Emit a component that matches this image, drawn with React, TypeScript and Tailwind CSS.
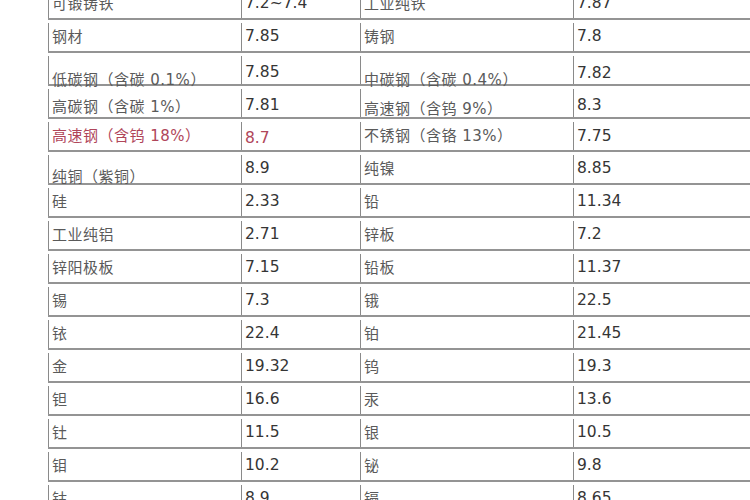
type Cell = { text: string; lift?: string; red?: boolean }
type Row = [Cell, Cell, Cell, Cell]

const c = (text: string, lift?: string, red?: boolean): Cell => ({ text, lift, red })

const rows: Row[] = [
  [c("可锻铸铁"), c("7.2~7.4"), c("工业纯铁"), c("7.87")],
  [c("钢材"), c("7.85"), c("铸钢"), c("7.8")],
  [c("低碳钢（含碳 0.1%）", "translate-y-[10px]"), c("7.85", "translate-y-[3px]"), c("中碳钢（含碳 0.4%）", "translate-y-[10px]"), c("7.82", "translate-y-[4px]")],
  [c("高碳钢（含碳 1%）", "translate-y-[4px]"), c("7.81", "translate-y-[3px]"), c("高速钢（含钨 9%）", "translate-y-[6px]"), c("8.3", "translate-y-[3px]")],
  [c("高速钢（含钨 18%）", "", true), c("8.7", "translate-y-[3px]", true), c("不锈钢（含铬 13%）"), c("7.75", "translate-y-[1px]")],
  [c("纯铜（紫铜）", "translate-y-[8px]"), c("8.9"), c("纯镍"), c("8.85")],
  [c("硅"), c("2.33"), c("铅"), c("11.34")],
  [c("工业纯铝"), c("2.71"), c("锌板"), c("7.2")],
  [c("锌阳极板"), c("7.15"), c("铅板"), c("11.37")],
  [c("锡"), c("7.3"), c("锇"), c("22.5")],
  [c("铱"), c("22.4"), c("铂"), c("21.45")],
  [c("金"), c("19.32"), c("钨"), c("19.3")],
  [c("钽"), c("16.6"), c("汞"), c("13.6")],
  [c("钍"), c("11.5"), c("银"), c("10.5")],
  [c("钼"), c("10.2"), c("铋"), c("9.8")],
  [c("钴"), c("8.9"), c("镉"), c("8.65")],
]

const TableCell = ({ cell, value }: { cell: Cell; value: boolean }) => {
  const color = cell.red ? "text-[#b0465a]" : value ? "text-[#353535]" : "text-[#5a5a5a]"
  return (
    <div className="flex items-center border-l border-[#8a8a8a] pl-[3px] overflow-visible">
      <span
        className={`whitespace-nowrap leading-none ${value ? "text-[15.5px]" : "text-[15px] tracking-[0.5px]"} ${color} ${cell.lift ?? ""}`}
      >
        {cell.text}
      </span>
    </div>
  )
}

export default function App() {
  return (
    <div
      className="w-[750px] h-[500px] overflow-hidden bg-white"
      style={{ fontFamily: '"DejaVu Sans", "Noto Sans CJK SC", sans-serif' }}
    >
      <div className="ml-[48px] -mt-[13px] flex flex-col">
        {rows.map((row, i) => (
          <div
            key={i}
            className="grid grid-cols-[193px_119px_213px_1fr] h-[33px] border-b-2 border-[#949494] pt-[3px]"
          >
            {row.map((cell, j) => (
              <TableCell key={j} cell={cell} value={j % 2 === 1} />
            ))}
          </div>
        ))}
      </div>
    </div>
  )
}
